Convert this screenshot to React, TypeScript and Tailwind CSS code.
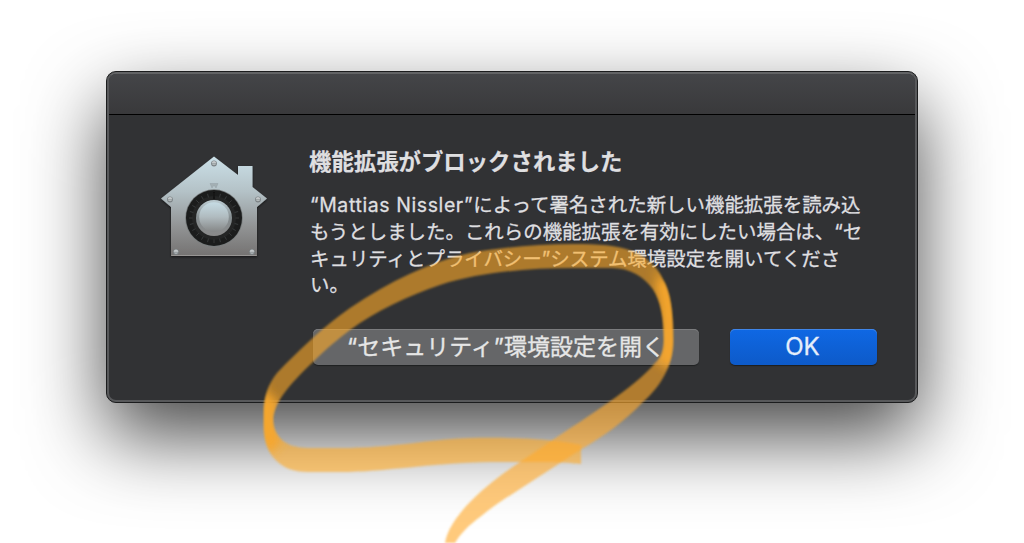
import { FC, ReactNode } from 'react';

// --- Constants ---
const SIGNER = '“Mattias Nissler”';

const MESSAGE_LINES = [
  'もうとしました。これらの機能拡張を有効にしたい場合は、“セ',
  'キュリティとプライバシー”システム環境設定を開いてくださ',
  'い。',
];

const SCREWS = [
  [64, 18.5],
  [20, 54.5],
  [108, 54.5],
  [26, 107],
  [102, 107],
];

const TICKS = Array.from({ length: 24 }, (_, i) => i * 15);

// Edges of the marker stroke, from the end of the lower band round to the right-hand turn
const LOOP_PATH =
  'M581 445 C560 440 520 437 470 438 C430 439 395 448 340 448 L308 448 C286 448 273 437 273 420 C273 403 290 384 313 362 ' +
  'C326 349 338 339 350 330 C376 311 408 296 440 285 C480 272 530 268 573 268 L612 268 C630 268 644 277 653 289 ' +
  'C661 301 664 318 664 340 L673 340 C673 310 670 292 663 280 C656 263 642 255 632 251 C618 245 597 244 573 244 C540 244 505 247 470 253 ' +
  'C430 262 390 281 350 308 C323 327 300 349 277 373 C268 384 264 397 264 413 L264 425 C264 455 280 472 308 472 ' +
  'L340 472 C385 472 430 463 490 462 L530 462 C560 462 570 463 581 464 Z';

const TAIL_PATH =
  'M664 340 C664 353 660 359 655 363 C640 382 600 409 557 437 L523 460 C506 471 488 484 473 499 C457 515 447 530 445 543 ' +
  'L455 543 C460 534 469 525 480 517 C494 505 508 497 523 487 L580 450 C604 436 625 421 643 402 C660 387 673 367 673 340 Z';

// --- Icon ---
const GatekeeperIcon: FC = () => (
  <svg className="block h-32 w-32" viewBox="0 0 128 128" aria-hidden="true">
    <defs>
      <linearGradient id="house" x1="0" y1="0" x2="0" y2="1">
        <stop offset="0" stopColor="#cbe0e8" />
        <stop offset="0.35" stopColor="#b4c2c7" />
        <stop offset="0.7" stopColor="#929495" />
        <stop offset="1" stopColor="#747271" />
      </linearGradient>
      <linearGradient id="knob" x1="0" y1="0" x2="0" y2="1">
        <stop offset="0" stopColor="#c6dce4" />
        <stop offset="0.5" stopColor="#b0bbbf" />
        <stop offset="1" stopColor="#858787" />
      </linearGradient>
      <linearGradient id="rim" x1="0" y1="0" x2="0" y2="1">
        <stop offset="0" stopColor="#bdcdd3" />
        <stop offset="0.5" stopColor="#858d90" />
        <stop offset="1" stopColor="#8a8a8a" />
      </linearGradient>
      <filter id="houseShadow" x="-10%" y="-10%" width="120%" height="125%">
        <feDropShadow dx="0" dy="1.2" stdDeviation="1.2" floodOpacity="0.55" />
      </filter>
    </defs>
    <path
      d="M64 11.5 L88 30 V21 H102.5 V42 L117 53.5 L107 62 V111 H21 V62 L11 53.5 Z"
      fill="url(#house)"
      filter="url(#houseShadow)"
    />
    <path d="M21.3 110.5 H106.7" stroke="#a09e9d" strokeWidth="0.8" />
    {SCREWS.map(([x, y]) => (
      <g key={`${x}-${y}`}>
        <circle cx={x} cy={y} r="2.9" fill="#7a8184" />
        <circle cx={x} cy={y - 0.4} r="2.2" fill="#c3c8ca" />
        <path d={`M${x - 2} ${y + 0.3} h4`} stroke="#858b8e" strokeWidth="0.8" />
      </g>
    ))}
    <path d="M60 38.5 H68 L66 43 L64 40 L62 43 Z" fill="#a3afb3" stroke="#95a1a6" strokeWidth="0.5" />
    <circle cx="64" cy="73" r="28.8" fill="#787d7e" />
    <circle cx="64" cy="73" r="28" fill="#1b1c1c" />
    <circle cx="64" cy="73" r="22" fill="#242525" />
    {TICKS.map((angle) => (
      <path key={angle} d="M64 48 v3.6" stroke="#3c3f40" strokeWidth="0.8" transform={`rotate(${angle} 64 73)`} />
    ))}
    <path d="M64 47 v7" stroke="#080808" strokeWidth="1.1" />
    <circle cx="64" cy="73" r="18" fill="url(#rim)" />
    <circle cx="64" cy="72" r="14.8" fill="url(#knob)" />
  </svg>
);

// --- Marker stroke drawn over the dialog ---
const MarkerStroke: FC = () => (
  <svg className="pointer-events-none absolute inset-0" width="1024" height="543" viewBox="0 0 1024 543" aria-hidden="true">
    <defs>
      <clipPath id="strokeClip">
        <path d={LOOP_PATH} />
        <path d={TAIL_PATH} />
      </clipPath>
      <filter id="soften" x="-5%" y="-5%" width="110%" height="110%">
        <feGaussianBlur stdDeviation="0.9" />
      </filter>
      <filter id="turnBlur" filterUnits="userSpaceOnUse" x="240" y="220" width="460" height="280">
        <feGaussianBlur stdDeviation="5" />
      </filter>
    </defs>
    <g fill="#ffaa2a" filter="url(#soften)">
      <path d={LOOP_PATH} fillOpacity="0.6" />
      <path d={TAIL_PATH} fillOpacity="0.62" />
    </g>
    <g filter="url(#soften)">
      <g clipPath="url(#strokeClip)">
        <g fill="none" stroke="#f8a72b" strokeLinecap="round" filter="url(#turnBlur)">
          <path d="M267 404 Q265 420 270 440" strokeWidth="20" strokeOpacity="0.95" />
          <path d="M664 286 Q670 305 669 330 Q669 350 667 358" strokeWidth="18" strokeOpacity="0.95" />
          <path d="M264 388 Q262 420 268 452" strokeWidth="8" strokeOpacity="0.5" />
          <path d="M656 272 Q674 310 674 366" strokeWidth="6" strokeOpacity="0.5" />
        </g>
      </g>
    </g>
  </svg>
);

// --- Buttons ---
interface DialogButtonProps {
  primary?: boolean;
  children: ReactNode;
}

const DialogButton: FC<DialogButtonProps> = ({ primary, children }) => (
  <button
    type="button"
    className={
      primary
        ? 'flex h-9 w-[147px] items-center justify-center rounded-[5px] bg-linear-to-b from-[#0f68e4] to-[#0d5ac9] pr-0.5 text-2xl text-[#e5eefb] shadow-[inset_0_1px_0_#4086e9,0_1px_1px_#1c1d1e] [-webkit-text-stroke:0.3px_currentColor]'
        : 'flex h-9 w-[386px] items-center justify-center rounded-[5px] bg-[#656668] text-[23px] whitespace-nowrap text-[#e6e6e6] shadow-[inset_0_1px_0_#7b7c7e,0_1px_1px_#1f2021] [-webkit-text-stroke:0.3px_currentColor]'
    }
  >
    {children}
  </button>
);

// --- Main Component ---
const App: FC = () => (
  <div className="relative flex h-[543px] w-[1024px] items-start overflow-hidden bg-white pt-[71px] pl-[106px] font-['Inter','Noto_Sans_CJK_JP',sans-serif]">
    <div className="h-[332px] w-[812px] rounded-[10px] border border-[#1b1c1d] bg-[#313234] shadow-[0_33px_78px_rgba(0,0,0,0.72)]">
      <div className="flex h-full flex-col rounded-[9px] border-2 border-[#58595b] border-t-[#626365]">
        <div className="h-[41px] shrink-0 rounded-t-[7px] border-b border-black bg-linear-to-b from-[#444548] to-[#39393b]" />
        <div className="flex pt-[30px] pl-[41px]">
          <GatekeeperIcon />
          <div className="ml-8 w-[567px] text-[#dfdfe0]">
            <h1 className="-ml-px h-[33px] text-[22.4px] leading-[33px] font-bold whitespace-nowrap [-webkit-text-stroke:0.2px_currentColor]">
              機能拡張がブロックされました
            </h1>
            <div className="mt-[14px] text-[19.45px] leading-[26.8px] whitespace-nowrap [-webkit-text-stroke:0.3px_currentColor]">
              <p>
                <span className="tracking-[0.62px]">{SIGNER}</span>によって署名された新しい機能拡張を読み込
              </p>
              {MESSAGE_LINES.map((line) => (
                <p key={line}>{line}</p>
              ))}
            </div>
            <div className="mt-[29.8px] ml-[3px] flex gap-[31px]">
              <DialogButton>
                <span>“セキュリティ”環境設定を開く</span>
              </DialogButton>
              <DialogButton primary>OK</DialogButton>
            </div>
          </div>
        </div>
      </div>
    </div>
    <MarkerStroke />
  </div>
);

export default App;
